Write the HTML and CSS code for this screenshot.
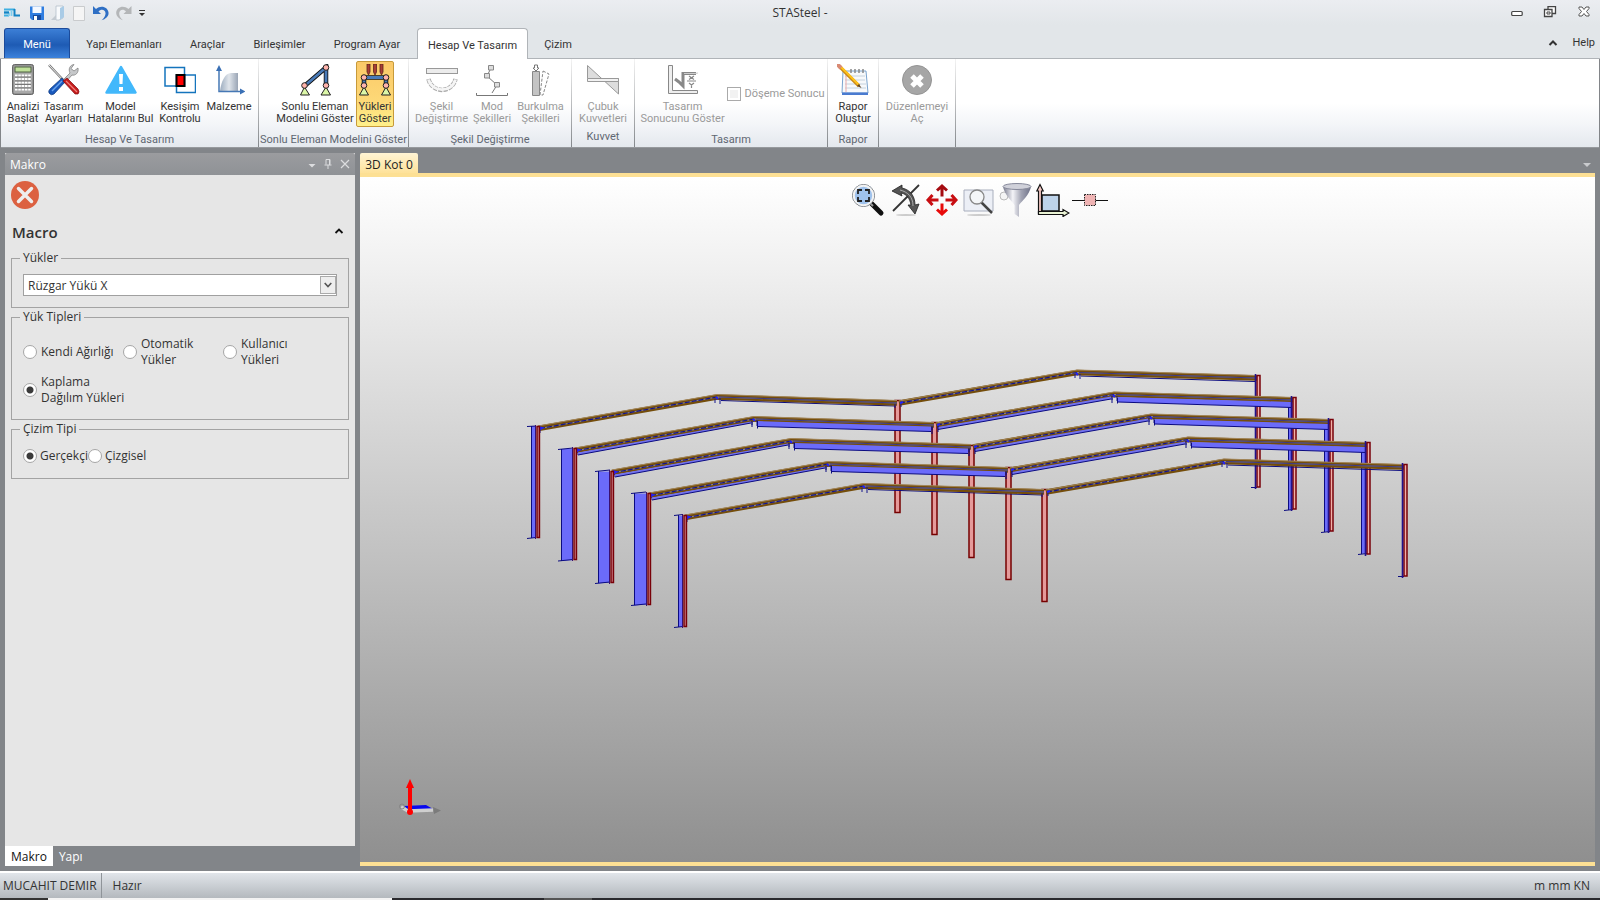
FILE: index.html
```html
<!DOCTYPE html>
<html lang="tr">
<head>
<meta charset="utf-8">
<title>STASteel</title>
<link rel="stylesheet" href="styles.css">
</head>
<body>
<div class="app">
  <header class="titlebar">
    <div class="quick">
      <svg class="logo" width="16" height="16" viewBox="0 0 16 16"><path d="M0 4.500H11M0 7.500H5M0 10.500H5" stroke="#3fb0e2" stroke-width="2" fill="none"/><path d="M5 7.500V11M7.500 6V11" stroke="#7fcdee" stroke-width="1.800"/><path d="M0 7.500H5M10.500 4V10.500H16" stroke="#1583c4" stroke-width="2" fill="none"/></svg>
      <button class="qbtn" aria-label="Kaydet"><svg width="16" height="16" viewBox="0 0 16 16"><path d="M1 1.500H15V15H3L1 13Z" fill="#2f7de0"/><path d="M3.500 1.500H12.500V8H3.500Z" fill="#f4f8ff"/><path d="M4 10H12V15H4Z" fill="#174a9c"/><path d="M5 11H8V15H5Z" fill="#fff"/></svg></button>
      <button class="qbtn" aria-label="Aç"><svg width="16" height="16" viewBox="0 0 16 16"><path d="M6 1H13V13L9 15H6Z" fill="#f8fafc" stroke="#b4bfca" stroke-width=".8"/><path d="M10 3L14 1V12L10 15Z" fill="#a9cbe6"/><path d="M1 15L6 10V15Z" fill="#c3cad1"/></svg></button>
      <button class="qbtn" aria-label="Yeni"><svg width="16" height="16" viewBox="0 0 16 16"><path d="M2.500 1.500H13.500V15.500H2.500Z" fill="#f5f5f5" stroke="#c9cbcd"/></svg></button>
      <button class="qbtn" aria-label="Geri al"><svg width="18" height="16" viewBox="0 0 18 16"><path d="M1 1V9H9L6.500 6.500C9 3.500 14 4.500 13.500 9C13.200 12 11 14 9.500 15.300C14 14 17 11 16.500 7.500C16 2 9 -.500 4 4Z" fill="#2f6fc4"/></svg></button>
      <button class="qbtn" aria-label="Yinele"><svg width="18" height="16" viewBox="0 0 18 16"><path d="M16.500 1V9H8.500L11 6.500C8.500 3.500 4 4.500 4.200 9C4.400 12 6.500 14 8 15.300C4 14 1 11 1.200 7.500C1.500 2 8.500 -.500 13.500 4Z" fill="#b4b6b8"/></svg></button>
      <button class="qbtn more" aria-label="Özelleştir"><svg width="8" height="8" viewBox="0 0 8 8"><path d="M1 1.500H7" stroke="#333"/><path d="M1 4H7L4 7Z" fill="#333"/></svg></button>
    </div>
    <h1 class="title">STASteel -</h1>
    <div class="winbtns">
      <button aria-label="Küçült"><svg width="12" height="14" viewBox="0 0 12 14"><rect x=".7" y="5.500" width="10.500" height="4" rx="1" fill="#fff" stroke="#444" stroke-width="1.200"/></svg></button>
      <button aria-label="Geri yükle"><svg width="14" height="14" viewBox="0 0 14 14"><path d="M5 3V.7H12.500V7.500H9.500M1.500 3.500H9V10.500H1.500Z" fill="#fff" stroke="#444" stroke-width="1.300"/><path d="M4 6H7V8H4Z" fill="#fff" stroke="#444"/></svg></button>
      <button aria-label="Kapat"><svg width="14" height="14" viewBox="0 0 14 14"><path d="M2 1H5L7 3.500L9 1H12V2.500L9.500 5.500L12 8.500V10H9L7 7.500L5 10H2V8.500L4.500 5.500L2 2.500Z" fill="#fff" stroke="#555"/></svg></button>
    </div>
  </header>

  <nav class="tabs">
    <button class="tab menu">Menü</button>
    <button class="tab w102">Yapı Elemanları</button>
    <button class="tab w65">Araçlar</button>
    <button class="tab w79">Birleşimler</button>
    <button class="tab w96">Program Ayar</button>
    <button class="tab active">Hesap Ve Tasarım</button>
    <button class="tab w60">Çizim</button>
    <span class="spacer"></span>
    <button class="tab help-arrow" aria-label="Şeridi daralt"><svg width="10" height="8" viewBox="0 0 10 8"><path d="M1.500 6L5 2.500L8.500 6" fill="none" stroke="#333" stroke-width="2"/></svg></button>
    <a class="help" href="#help">Help</a>
  </nav>

  <section class="ribbon">
    <div class="group g1">
      <div class="items">
        <button class="tool w40"><svg width="32" height="32" viewBox="0 0 32 32"><rect x="5.500" y=".500" width="21" height="30" rx="2" fill="#7c7c7c" stroke="#666"/><rect x="6.500" y="1.500" width="19" height="28" rx="1" fill="#a9a9a9"/><rect x="8" y="3" width="16" height="5" fill="#bfe09a" stroke="#4d6040"/><path d="M8 11.500H24M8 15H24M8 18.500H24M8 22H24M8 25.500H24" stroke="#fff" stroke-width="2" stroke-dasharray="2.500 .8"/><path d="M8 13H24M8 17H24M8 20.500H24M8 24H24" stroke="#555" stroke-width=".600"/></svg><span>Analizi<br>Başlat</span></button>
        <button class="tool w41"><svg width="32" height="32" viewBox="0 0 32 32"><path d="M1 1L17 18" stroke="#777" stroke-width="2.500"/><path d="M1 1L17 18" stroke="#eee" stroke-width="1"/><path d="M14 17L22 9C20 5 22 1 26 .500L23 4.500L26 7L30 4C31 9 27 12 24 11L17 19Z" fill="#c6c8ca" stroke="#777" stroke-width=".700"/><path d="M14 14L17 18L6 30Q3 32 1 29Q0 27 2 25Z" fill="#1959bd" stroke="#0a3478" stroke-width=".700"/><path d="M4 27L14 17" stroke="#69a3ed" stroke-width="1.500"/><path d="M15 17L19 14L30 25Q32 28 30 30L27 30Z" fill="#c51c1c" stroke="#7e0f12" stroke-width=".700"/><path d="M18 17L29 28" stroke="#f2827d" stroke-width="1.200"/></svg><span>Tasarım<br>Ayarları</span></button>
        <button class="tool w73"><svg width="32" height="32" viewBox="0 0 32 32"><path d="M16 3L30.500 28.500H1.500Z" fill="#42b8fb" stroke="#42b8fb" stroke-width="2.500" stroke-linejoin="round"/><path d="M14 10H18L17.500 20H14.500ZM14 23H18V27H14Z" fill="#fff"/></svg><span>Model<br>Hatalarını Bul</span></button>
        <button class="tool w46"><svg width="32" height="32" viewBox="0 0 32 32"><path d="M1 3.500H20.500V22H1ZM12.500 11H31.500V28.500H12.500Z" fill="none" stroke="#1474bd" stroke-width="1.500"/><path d="M12.500 11H20.500V22H12.500Z" fill="#f00" stroke="#000" stroke-width="2"/></svg><span>Kesişim<br>Kontrolu</span></button>
        <button class="tool w52"><svg width="32" height="32" viewBox="0 0 32 32"><defs><linearGradient id="steel"><stop stop-color="#9cacbf"/><stop offset=".5" stop-color="#e0e5eb"/><stop offset="1" stop-color="#9aa5b5"/></linearGradient></defs><path d="M7 27C8 18 12 9 18 9H25V27Z" fill="url(#steel)"/><path d="M6 4V27.500H29" fill="none" stroke="#4678b5" stroke-width="1.500"/><path d="M3 7L6 1L9 7ZM27 24.500L32.500 27.500L27 30.500Z" fill="#3a70b5"/></svg><span>Malzeme</span></button>
      </div>
      <div class="caption">Hesap Ve Tasarım</div>
    </div>
    <div class="group g2">
      <div class="items">
        <button class="tool w82"><svg width="32" height="32" viewBox="0 0 32 32"><path d="M5.500 22L27 3.500V21" fill="none" stroke="#111" stroke-width="4.500"/><path d="M5.500 22L27 3.500V21" fill="none" stroke="#4a7bb8" stroke-width="2.800"/><path d="M1.500 31L5.500 23L10.500 31ZM22 31L27 23L31.500 31Z" fill="#dcf7a8" stroke="#222"/><g fill="#ffb3ac" stroke="#222"><circle cx="5.500" cy="21.500" r="2.800"/><circle cx="27" cy="3.500" r="2.800"/><circle cx="27" cy="21.500" r="2.800"/></g></svg><span>Sonlu Eleman<br>Modelini Göster</span></button>
        <button class="tool pressed"><svg width="32" height="32" viewBox="0 0 32 32"><path d="M5 21V13.500H27V21" fill="none" stroke="#111" stroke-width="4.500"/><path d="M5 21V13.500H27V21" fill="none" stroke="#4a7bb8" stroke-width="2.800"/><g fill="#a83c34" stroke="#5c241c" stroke-width=".800"><path d="M8 0H11V8L9.500 11L8 8ZM14.500 0H17.500V8L16 11L14.500 8ZM21 0H24V8L22.500 11L21 8Z"/></g><path d="M.5 31L5 23L9.500 31ZM22.500 31L27 23L31.500 31Z" fill="#dcf7a8" stroke="#222"/><g fill="#ffb3ac" stroke="#222"><circle cx="5" cy="13.500" r="2.800"/><circle cx="27" cy="13.500" r="2.800"/><circle cx="5" cy="21.500" r="2.800"/><circle cx="27" cy="21.500" r="2.800"/></g></svg><span>Yükleri<br>Göster</span></button>
      </div>
      <div class="caption">Sonlu Eleman Modelini Göster</div>
    </div>
    <div class="group g3">
      <div class="items">
        <button class="tool w56" disabled><svg width="32" height="32" viewBox="0 0 32 32"><rect x=".5" y="4.500" width="31" height="5" fill="#ececec" stroke="#999"/><path d="M2.500 15C6 29.500 26 29.500 29.500 15" fill="none" stroke="#aaa" stroke-width="4.500" stroke-dasharray="4 1"/><path d="M2.500 15.500C6 29 26 29 29.500 15.500" fill="none" stroke="#f5f5f5" stroke-width="2.800"/></svg><span>Şekil<br>Değiştirme</span></button>
        <button class="tool w45" disabled><svg width="32" height="32" viewBox="0 0 32 32"><path d="M15 4L11 12L21 21L16 29" fill="none" stroke="#777"/><g fill="#ddd" stroke="#888"><path d="M12.500 1.500H17.500V6H12.500ZM8.500 9.500H13.500V14H8.500ZM18.500 18.500H23.500V23H18.500Z"/></g><path d="M.5 29V31.500H31.500V29" fill="none" stroke="#777"/></svg><span>Mod<br>Şekilleri</span></button>
        <button class="tool w52" disabled><svg width="32" height="32" viewBox="0 0 32 32"><path d="M7.500 7.500H14.500V31.500H7.500Z" fill="#c4c4c4" stroke="#888"/><path d="M9.500 1H12.500V4H14L11 7L8 4H9.500Z" fill="#fff" stroke="#777"/><path d="M18 7L24 10L18 31H15Z" fill="none" stroke="#888" stroke-dasharray="3 1.500"/></svg><span>Burkulma<br>Şekilleri</span></button>
      </div>
      <div class="caption">Şekil Değiştirme</div>
    </div>
    <div class="group g4">
      <div class="items">
        <button class="tool w56" disabled><svg width="32" height="32" viewBox="0 0 32 32"><path d="M.5 1.500L31.500 30V14.500H.5Z" fill="#ddd" stroke="#999"/><path d="M.5 14.500H31.500V17.500H.5Z" fill="#f2f2f2" stroke="#999"/></svg><span>Çubuk<br>Kuvvetleri</span></button>
      </div>
      <div class="caption raised">Kuvvet</div>
    </div>
    <div class="group g5">
      <div class="items">
        <button class="tool w82" disabled><svg width="32" height="32" viewBox="0 0 32 32"><path d="M1.500 1.500H5.500V26.500H30.500V29.500H1.500Z" fill="#eee" stroke="#888"/><path d="M8 15L12 18L16 22V9.500H29" fill="none" stroke="#888" stroke-width="3"/><path d="M17 9.500H28L31 9" fill="none" stroke="#ccc"/><path d="M22 12L27 15.500M27 12L22 15.500M20 17H29M22 19L24.500 21L27 19M24.500 21V24" fill="none" stroke="#888" stroke-width="1.200"/></svg><span>Tasarım<br>Sonucunu Göster</span></button>
        <label class="check"><input type="checkbox" disabled>Döşeme Sonucu</label>
      </div>
      <div class="caption">Tasarım</div>
    </div>
    <div class="group g6">
      <div class="items">
        <button class="tool w46"><svg width="32" height="32" viewBox="0 0 32 32"><path d="M6 7H29L31 29H5Z" fill="#f7f9fb" stroke="#7aa4cf"/><path d="M5 28.500H31V31H5Z" fill="#4a7bd0"/><path d="M8 12H28M8 16H28M8 20H29M8 24H29" stroke="#c5d2de"/><path d="M9 8V28" stroke="#e9aaaa"/><path d="M14 5V9M18 5V9M22 5V9M26 5V9" stroke="#888" stroke-width="1.500"/><path d="M2 2L22 22" stroke="#c98a1a" stroke-width="3.200"/><path d="M3 2L22 21" stroke="#ffc21b" stroke-width="2"/><path d="M0 0L4 4" stroke="#d98a74" stroke-width="4"/><path d="M20 22L22 20L24.500 24Z" fill="#5c4324"/></svg><span>Rapor<br>Oluştur</span></button>
      </div>
      <div class="caption">Rapor</div>
    </div>
    <div class="group g7">
      <div class="items">
        <button class="tool w73" disabled><svg width="32" height="32" viewBox="0 0 32 32"><circle cx="16" cy="16" r="14.500" fill="#a6a6a6" stroke="#949494"/><path d="M11 12L21 22M21 12L11 22" stroke="#fff" stroke-width="5"/></svg><span>Düzenlemeyi<br>Aç</span></button>
      </div>
    </div>
  </section>

  <main class="work">
    <aside class="side">
      <div class="panel">
        <div class="panel-head"><h2>Makro</h2>
          <button aria-label="Seçenekler"><svg width="8" height="8" viewBox="0 0 8 8"><path d="M.5 4H7.500L4 7.500Z" fill="#dcdddf"/></svg></button>
          <button aria-label="Sabitle"><svg width="8" height="12" viewBox="0 0 8 12"><path d="M2 6.500V1.500H6V6.500M.5 7H7.500M4 7V11M5.500 1V7" fill="none" stroke="#dcdddf"/></svg></button>
          <button aria-label="Kapat"><svg width="10" height="10" viewBox="0 0 10 10"><path d="M1 1L9 9M9 1L1 9" stroke="#dcdddf" stroke-width="1.200"/></svg></button>
        </div>
        <div class="panel-tools"><button aria-label="İptal"><svg width="28" height="28" viewBox="0 0 28 28"><circle cx="14" cy="14" r="14" fill="#dc6141"/><path d="M7.500 7.500L20.500 20.500M20.500 7.500L7.500 20.500" stroke="#eee" stroke-width="3.500" stroke-linecap="round"/></svg></button></div>
        <div class="section-head"><h3>Macro</h3><button aria-label="Daralt"><svg width="10" height="8" viewBox="0 0 10 8"><path d="M1.500 5L5 1.500L8.500 5" fill="none" stroke="#111" stroke-width="1.800"/></svg></button></div>
        <fieldset class="box loads"><legend>Yükler</legend>
          <div class="combo"><select aria-label="Yükler"><option>Rüzgar Yükü X</option></select><span class="drop"><svg width="8" height="6" viewBox="0 0 8 6"><path d="M.7 1L4 4.500L7.300 1" fill="none" stroke="#555" stroke-width="1.600"/></svg></span></div>
        </fieldset>
        <fieldset class="box types"><legend>Yük Tipleri</legend>
          <div class="radios">
            <label class="radio"><input type="radio" name="load">Kendi Ağırlığı</label>
            <label class="radio"><input type="radio" name="load"><span>Otomatik<br>Yükler</span></label>
            <label class="radio"><input type="radio" name="load"><span>Kullanıcı<br>Yükleri</span></label>
            <label class="radio"><input type="radio" name="load" checked><span>Kaplama<br>Dağılım Yükleri</span></label>
          </div>
        </fieldset>
        <fieldset class="box draw"><legend>Çizim Tipi</legend>
          <div class="inline-radios">
            <label class="radio"><input type="radio" name="draw" checked>Gerçekçi</label>
            <label class="radio"><input type="radio" name="draw">Çizgisel</label>
          </div>
        </fieldset>
      </div>
      <div class="side-tabs"><button class="on">Makro</button><button>Yapı</button></div>
    </aside>

    <section class="doc">
      <div class="doc-tabs"><button class="doc-tab">3D Kot 0</button><button class="doc-more" aria-label="Belgeler"><svg width="8" height="8" viewBox="0 0 8 8"><path d="M0 4H8L4 8Z" fill="#c9cbce"/></svg></button></div>
      <div class="view">
        <svg class="scene" viewBox="360 177 1235 685" role="img" aria-label="3D çelik çerçeve modeli">
          <defs>
            <g id="beams" fill="none">
              <path d="M538 428.500L717 397L897 403M899 403L1077 372.500L1257 378" stroke="#744d0b" stroke-width="5.500"/>
              <path d="M538 426L717 394.500L897 400.500M899 401L1077 370L1257 375.500" stroke="#a2865a"/>
              <path d="M540 428.500L717 397L897 403M900 403L1077 372.500L1257 378" stroke="#85828f" stroke-width="1.200"/>
              <path d="M540 428.500L717 397M900 403L1077 372.500" stroke="#15158a" stroke-width="1.200" stroke-dasharray="5 2"/>
              <path d="M719 397L897 403M1079 372.500L1257 378" stroke="#3c3880"/>
              <path d="M715 399V403M720 398V404M1075 374V378M1080 374V379M895 404V408M901 404V407M540 429V433" stroke="#14148c"/>
              <path d="M716 397L718 399M1076 373L1078 375M539 427L542 428L539 430M900 403L903 402" stroke="#2020ff" stroke-width="2"/>
            </g>
            <g id="edge" fill="none" stroke="#0b0b80"><path d="M721 400.500L895 406M1081 376L1255 381.500"/></g>
            <g id="loads">
              <path d="M541 430.500L714 399.500V401L541 433ZM901 405L1074 374.500V377L901 407.500Z" fill="#7272ee"/>
              <path d="M541 433L714 401M901 407.500L1074 377" stroke="#0b0b80" fill="none"/>
              <path d="M721 399L894 404.500V409.500L721 404.500ZM1081 375L1255 380V385.500L1081 380Z" fill="#6b6bfa"/>
              <path d="M721 404.500L894 409.500M1081 380L1255 385.500M715 400V405M720.500 399V406.500M1075 376V381M1080.500 376V381.500M895 405V412M901 404V410" stroke="#0b0b80" fill="none"/>
            </g>
            <g id="post"><path d="M895 400.500H900V512.500H895Z" fill="#e59a9a" stroke="#760000" stroke-width="1.500"/></g>
            <g id="redl"><path d="M537 426.500H539.500V537.500H537Z" fill="#c4757e" stroke="#780008" stroke-width="1.400"/><path d="M535.500 425V539" stroke="#3a1070"/></g>
            <g id="redr"><path d="M1257 375.500H1260V487H1257Z" fill="#f0b0a8" stroke="#780008" stroke-width="1.500"/><path d="M1255.500 374V489" stroke="#22128b" stroke-width="1.600"/></g>
          </defs>
          <g>
            <use href="#post"/>
            <path d="M531 426H536V538H531Z" fill="#6b6bfa"/><path d="M531.500 426V538M527 426.500L536 426M527 538.500L536 537.500M1251 487.500H1257" stroke="#0b0b80"/>
            <use href="#edge"/><use href="#beams"/><use href="#redl"/><use href="#redr"/>
          </g>
          <g>
            <use href="#post" x="37" y="22"/>
            <path d="M561 449H573V560L561 561ZM1288 403H1293V509.500H1288Z" fill="#6b6bfa"/><path d="M561.500 449V561M1288.500 403V510M558 449.500L573 448M558 561L573 559.500M1284 510.500L1293 509.500" stroke="#0b0b80"/>
            <use href="#beams" x="37" y="22"/><use href="#loads" x="37" y="22"/><use href="#redl" x="37" y="22"/><use href="#redr" x="36" y="22"/>
          </g>
          <g>
            <use href="#post" x="74" y="45"/>
            <path d="M598 471.500H609V582.500L598 583.500ZM1324 425H1330V531.500H1324Z" fill="#6b6bfa"/><path d="M598.500 471V583M1324.500 425V532M595 471.500L610 470M595 583.500L610 582M1321 532.500L1330 531.500" stroke="#0b0b80"/>
            <use href="#beams" x="74" y="44"/><use href="#loads" x="74" y="44"/><use href="#redl" x="74" y="45"/><use href="#redr" x="73" y="44"/>
          </g>
          <g>
            <use href="#post" x="111" y="67"/>
            <path d="M634 493.500H646V604.500L634 605.500ZM1361 448H1367V553.500H1361Z" fill="#6b6bfa"/><path d="M634.500 493V605M1361.500 448V554M631 493.500L646 492M631 605.500L646 604M1358 554.500L1367 553.500" stroke="#0b0b80"/>
            <use href="#beams" x="111" y="67"/><use href="#loads" x="111" y="67"/><use href="#redl" x="111" y="67"/><use href="#redr" x="110" y="67"/>
          </g>
          <g>
            <use href="#post" x="147" y="89"/>
            <path d="M678 516H683V627H678Z" fill="#6b6bfa"/><path d="M678.500 515V627M674 515.500L683 514.500M674 627.500L683 626.500M1398 576.500H1404" stroke="#0b0b80"/>
            <use href="#edge" x="147" y="89"/><use href="#beams" x="147" y="89"/><use href="#redl" x="147" y="89"/><use href="#redr" x="147" y="89"/>
          </g>
          <g>
            <path d="M404 806L426 805L433 809L410 811Z" fill="#0808ee"/>
            <path d="M401 807L408 811L433 810" fill="none" stroke="#cfcfcf" stroke-width="3.500"/>
            <circle cx="402" cy="806.500" r="2.500" fill="none" stroke="#858585"/>
            <path d="M433 807L441 810.500L434 814Z" fill="#7b7b7b"/>
            <path d="M410 787V812" stroke="#f00" stroke-width="4"/><path d="M406 788L410 779L414 788Z" fill="#f00"/><circle cx="410" cy="812" r="3" fill="#f00"/>
          </g>
        </svg>
        <div class="view-tools">
          <button aria-label="Sığdır"><svg width="34" height="34" viewBox="0 0 34 34"><path d="M20 20L30 30" stroke="#111" stroke-width="5" stroke-linecap="round"/><path d="M19 20L22 23" stroke="#999" stroke-width="2"/><circle cx="12.500" cy="12.500" r="11" fill="#9fc2ec" stroke="#777"/><circle cx="12.500" cy="12.500" r="9.700" fill="none" stroke="#f2f2f2" stroke-width="2"/><path d="M7 11V7H11M14 7H18V11M18 14V18H14M11 18H7V14" fill="none" stroke="#222" stroke-width="1.800"/></svg></button>
          <button aria-label="Döndür"><svg width="34" height="34" viewBox="0 0 34 34"><ellipse cx="18" cy="32" rx="10" ry="1" fill="#ccc"/><path d="M5 28L31 2" stroke="#333" stroke-width="1.800"/><path d="M4 8L14 2V5C23 7 27 14 27 22L31 21L27 31L20 22L23 22C22 16 19 11 13 10L14 13Z" fill="#555" stroke="#222" stroke-width=".800"/><path d="M12 7C20 9 25 14 25 23" fill="none" stroke="#aaa"/></svg></button>
          <button aria-label="Kaydır"><svg width="34" height="34" viewBox="0 0 34 34"><g fill="none" stroke="#c80e12" stroke-width="3"><path d="M17 13.500V4M12 7.500L17 3L22 7.500" stroke="#a50b10"/><path d="M17 20.500V30M12 26.500L17 31L22 26.500" stroke="#e80a0a"/><path d="M13.500 17H4M7.500 12L3 17L7.500 22M20.500 17H30M26.500 12L31 17L26.500 22"/></g></svg></button>
          <button aria-label="Pencere yakınlaştır"><svg width="34" height="34" viewBox="0 0 34 34"><ellipse cx="17" cy="32" rx="12" ry="1" fill="#ccc"/><path d="M2 7H31V28H2Z" fill="#eceff6" stroke="#a8aebd"/><path d="M19 19L30 30" stroke="#444" stroke-width="2.500"/><circle cx="15" cy="14" r="7" fill="#f4f6f8" stroke="#888" stroke-width="1.300"/></svg></button>
          <button aria-label="Filtre"><svg width="34" height="34" viewBox="0 0 34 34"><defs><linearGradient id="cone"><stop stop-color="#77798c"/><stop offset=".35" stop-color="#f4f4f8"/><stop offset=".65" stop-color="#a3a5b4"/><stop offset="1" stop-color="#6f7288"/></linearGradient></defs><circle cx="5" cy="13" r="4" fill="#f5f5f5" stroke="#bbb"/><path d="M4 4C6 12 12 17 15.500 22V31L20 34V22C24 17 30 12 32 4Z" fill="url(#cone)"/><ellipse cx="18" cy="3.500" rx="14" ry="3" fill="#d0d1da" stroke="#85889a"/></svg></button>
          <button aria-label="Düzlem"><svg width="34" height="34" viewBox="0 0 34 34"><path d="M6 12H23V28H6Z" fill="#bdd3ea" stroke="#111" stroke-width="1.500"/><path d="M2.500 31V8H.8L4 1.500L7.200 8H5.500V28" fill="#f4c9c5" stroke="#111" stroke-width="1.200"/><path d="M2.500 28.500H27V26.500L33 30L27 33.500V31.500H2.500Z" fill="#eaf3d4" stroke="#111" stroke-width="1.200"/></svg></button>
          <button aria-label="Kesit"><svg width="36" height="34" viewBox="0 0 36 34"><path d="M0 17.500H36" stroke="#111"/><rect x="12.500" y="11.500" width="11" height="11" fill="#efb3b3" stroke="#222" stroke-dasharray="1.500 1"/></svg></button>
        </div>
      </div>
    </section>
  </main>

  <footer class="status"><span class="user">MUCAHIT DEMIR</span><span class="ready">Hazır</span><span class="units">m mm KN</span></footer>
  <div class="taskbar"></div>
</div>
</body>
</html>
```

FILE: styles.css
```css
* { box-sizing: border-box; }
body { margin: 0; font-family: "Open Sans", "Noto Sans", sans-serif; font-size: 12px; color: #333; }
button { font: inherit; color: inherit; background: none; border: 0; padding: 0; margin: 0; }
svg { display: block; flex: none; }
h1, h2, h3 { margin: 0; font-weight: 400; }

.app { height: 100vh; display: flex; flex-direction: column; background: #828589; }

.titlebar { display: grid; grid-template-columns: 1fr auto 1fr; align-items: center; height: 25px; flex: none; background: linear-gradient(#ebedf1, #e2e6e9); }
.quick { display: flex; align-items: center; gap: 5px; padding-left: 4px; }
.quick .logo { margin-right: 4px; }
.title { font-size: 12px; }
.winbtns { display: flex; justify-content: flex-end; gap: 20px; padding-right: 9px; }

.tabs { display: flex; align-items: flex-end; height: 34px; flex: none; padding-left: 4px; background: #e2e6e9; border-bottom: 1px solid #b0b4b8; font-family: Roboto, "Open Sans", sans-serif; font-size: 11px; }
.tab { height: 30px; padding-top: 2px; text-align: center; white-space: nowrap; }
.menu { width: 66px; margin-right: 3px; color: #fff; border: 1px solid #1b4b9b; border-bottom: 0; border-radius: 3px 3px 0 0; background: linear-gradient(#3c7fd6, #1e5bb4 55%, #3c82dc); }
.active { width: 111px; height: 31px; margin: 0 0 -1px 2px; background: #fff; border: 1px solid #b0b4b8; border-bottom: 0; border-radius: 4px 4px 0 0; }
.w102 { width: 102px; }
.w65 { width: 65px; }
.w79 { width: 79px; }
.w96 { width: 96px; }
.w60 { width: 60px; }
.spacer { flex: 1; }
.help-arrow { display: flex; align-items: center; padding-top: 0; margin-right: 14px; }
.help { color: inherit; text-decoration: none; line-height: 30px; padding-right: 5px; }

.ribbon { display: flex; height: 89px; flex: none; margin: 0 1px; border-bottom: 1px solid #96999d; background: linear-gradient(#fff 50%, #f3f5f8 75%, #e4e8ed); font-family: Roboto, "Open Sans", sans-serif; font-size: 11px; line-height: 12px; }
.group { display: flex; flex-direction: column; justify-content: space-between; border-right: 1px solid; border-image: linear-gradient(#f4f4f4, #83878b) 1; }
.g1 { width: 258px; }
.g2 { width: 150px; }
.g3 { width: 163px; }
.g4 { width: 63px; }
.g5 { width: 193px; }
.g6 { width: 51px; }
.g7 { width: 77px; }
.items { display: flex; justify-content: center; padding-top: 2px; }
.tool { display: flex; flex-direction: column; align-items: center; gap: 5px; height: 66px; padding-top: 3px; white-space: nowrap; }
.tool span { display: block; }
.tool > span { margin: 0 -10px; }
.tool:disabled, .check { color: #9a9a9a; }
.w40 { width: 40px; }
.w41 { width: 41px; }
.w73 { width: 73px; }
.w46 { width: 46px; }
.w52 { width: 52px; }
.w82 { width: 82px; }
.w56 { width: 56px; }
.w45 { width: 45px; }
.pressed { width: 38px; padding-top: 2px; border: 1px solid #c79a3a; border-radius: 2px; background: linear-gradient(#fbc968, #fdd877 60%, #fff08a); }
.g1 .items { justify-content: flex-start; padding-left: 2px; }
.g2 .items { justify-content: flex-end; padding-right: 14px; }
.g5 .items { padding-left: 4px; }
.caption { height: 13px; color: #5f6772; text-align: center; white-space: nowrap; }
.raised { height: 16px; }
.check { display: flex; align-items: center; gap: 4px; white-space: nowrap; padding-left: 3px; height: 66px; }
.check input { appearance: none; width: 14px; height: 14px; margin: 0; background: #f2f2f2; border: 1px solid #aaa; box-shadow: inset 0 0 0 2px #fff; }

.work { flex: 1; min-height: 0; display: flex; gap: 5px; padding: 5px; }
.side { width: 350px; flex: none; display: flex; flex-direction: column; }
.panel { flex: 1; background: #e6e6e6; }
.panel-head { display: flex; align-items: center; gap: 8px; height: 22px; padding: 0 5px; background: linear-gradient(#9b9c9f, #8f9296); color: #fff; border-radius: 2px 2px 0 0; }
.panel-head h2 { flex: 1; font-size: 12px; }
.panel-tools { padding: 6px; height: 40px; }
.section-head { display: flex; justify-content: space-between; align-items: center; height: 34px; padding: 0 11px 0 7px; }
.section-head h3 { font-size: 15px; font-weight: 600; color: #333; }
.box { margin: 0 6px; padding: 0 11px; border: 1px solid #a3a3a3; }
.box legend { padding: 0 3px; margin-left: -3px; line-height: 18px; height: 18px; }
.loads { height: 59px; }
.types { height: 112px; }
.draw { height: 59px; }
.combo { position: relative; margin-top: 7px; }
.combo select { appearance: none; display: block; width: 100%; height: 22px; padding: 0 4px; border: 1px solid #a0a0a0; border-radius: 0; background: #fff; font: inherit; color: inherit; }
.drop { position: absolute; right: 1px; top: 2px; width: 16px; height: 18px; display: grid; place-items: center; background: #eee; border: 1px solid #aaa; pointer-events: none; }
.radios { display: grid; grid-template-columns: repeat(3, 100px); row-gap: 6px; padding-top: 10px; }
.inline-radios { display: flex; padding-top: 10px; }
.radio { display: flex; align-items: center; gap: 4px; line-height: 16px; white-space: nowrap; }
.radio input { appearance: none; flex: none; width: 14px; height: 14px; margin: 0; border: 1px solid #a6a6a6; border-radius: 50%; background: #fff; }
.radio input:checked { background: radial-gradient(circle, #3b3b3b 0 3px, #fff 4px); }
.inline-radios .radio { gap: 3px; }
.side-tabs { display: flex; height: 20px; color: #fff; }
.side-tabs button { padding: 0 6px; }
.side-tabs .on { background: #fff; color: #111; }

.doc { flex: 1; min-width: 0; display: flex; flex-direction: column; }
.doc-tabs { display: flex; justify-content: space-between; align-items: stretch; height: 20px; }
.doc-tab { width: 58px; padding-top: 3px; color: #222; border-radius: 2px 2px 0 0; background: linear-gradient(#fff4d4, #fee29a); }
.doc-more { padding-right: 4px; }
.view { position: relative; flex: 1; min-height: 0; border-top: 4px solid #fde094; border-bottom: 4px solid #fde094; background: linear-gradient(#fff, #8f8f8f); }
.scene { width: 100%; height: 100%; }
.view-tools { position: absolute; top: 6px; left: 0; right: 0; display: flex; justify-content: center; padding-left: 3px; }
.view-tools button { width: 37px; display: grid; place-items: center; }

.status { display: flex; align-items: center; height: 27px; flex: none; border-top: 2px solid #fff; background: linear-gradient(#e1e5ea, #b4b9be); }
.user { padding: 0 4px 0 3px; line-height: 25px; border-right: 1px solid #8f9499; font-weight: 500; }
.ready { flex: 1; padding-left: 11px; }
.units { padding-right: 10px; }
.taskbar { height: 2px; flex: none; background: linear-gradient(90deg, #333 3%, #f3f3f3 3% 24.5%, #2a2a2e 24.5% 34%, #555 34% 37%, #2a2a2e 37%); }
```
